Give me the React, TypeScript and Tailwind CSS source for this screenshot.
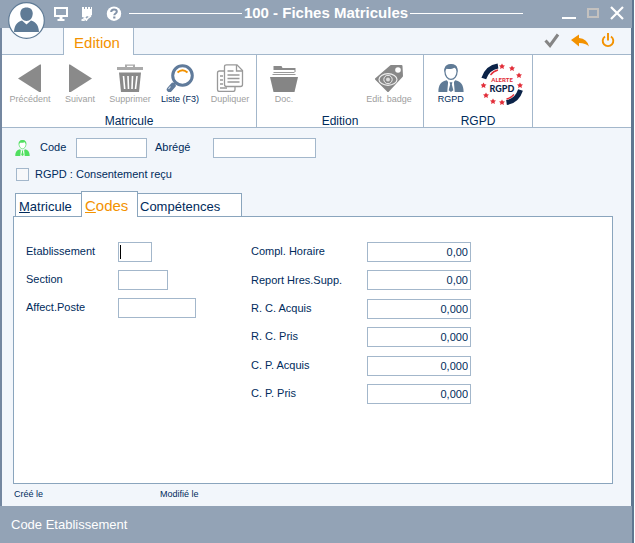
import type { ReactNode } from "react";

function Person({ className }: { className?: string }) {
  return (
    <svg viewBox="0 0 28 30" className={className} aria-hidden="true">
      <path d="M0.500 30c0-8 3-11 9-12.500l4.500 6 4.500-6c6 1.500 9 4.500 9 12.500z" fill="currentColor" />
      <path d="M11 18l3 4 3-4 1 12h-8z" fill="#fff" />
      <path d="M12.500 19.500h3l-.6 2.500 1.600 6-2.500 2-2.500-2 1.600-6z" fill="currentColor" />
      <path d="M7.500 8c0-4.500 2.500-7 6.500-7s6.500 2.500 6.500 7c0 4.500-3 8.500-6.500 8.500S7.500 12.500 7.500 8z" fill="#fff" stroke="currentColor" strokeWidth="1.300" />
      <path d="M7 9c-.8-6 2-9 7-9s7.800 3 7 9c-1-3-2-4.500-3.500-5-2 1.500-6 1.500-8 1-1.500 1-2 2-2.500 4z" fill="currentColor" />
    </svg>
  );
}

function Tool({ label, active, children }: { label: string; active?: boolean; children: ReactNode }) {
  return (
    <button
      type="button"
      className={`flex w-[50px] flex-col items-center whitespace-nowrap text-[9px] leading-[12px] ${active ? "text-[#002b5c]" : "text-[#a0a0a0]"}`}
    >
      <span className="flex h-[30px] items-center justify-center">{children}</span>
      {label}
    </button>
  );
}

function Group({ title, className, inner, children }: { title: string; className: string; inner: string; children: ReactNode }) {
  return (
    <section className={`flex flex-col justify-between border-r border-[#a3b7cb] ${className}`}>
      <div className={`flex justify-between pt-2 ${inner}`}>{children}</div>
      <h2 className="text-center text-[12px] leading-[12px] text-[#002b5c]">{title}</h2>
    </section>
  );
}

const box = "h-5 border border-[#a3b7cb] bg-white px-[2px] text-[11px] outline-none";

const codes = [
  { id: "etablissement", label: "Etablissement", width: "w-[34px]", caret: true },
  { id: "section", label: "Section", width: "w-[50px]", caret: false },
  { id: "poste", label: "Affect.Poste", width: "w-[78px]", caret: false },
];

const counters = [
  { id: "compl", label: "Compl. Horaire", value: "0,00" },
  { id: "report", label: "Report Hres.Supp.", value: "0,00" },
  { id: "rcacquis", label: "R. C. Acquis", value: "0,000" },
  { id: "rcpris", label: "R. C. Pris", value: "0,000" },
  { id: "cpacquis", label: "C. P. Acquis", value: "0,000" },
  { id: "cppris", label: "C. P. Pris", value: "0,000" },
];

function TitleBar() {
  return (
    <header className="relative flex h-7 items-center bg-[#93a3b6] pr-[7px] pb-[2px] pl-[53px] text-white">
      <button type="button" aria-label="Profil" className="absolute top-[2px] left-2 z-10">
        <svg viewBox="0 0 37 37" className="size-[37px]">
          <circle cx="18.500" cy="18.500" r="17.800" fill="#fff" stroke="#5f7b96" strokeWidth="1.200" />
          <path d="M6 30c.5-6 2-9.500 8-11.500l4.500 4 4.500-4c6 2 7.500 5.500 8 11.500z" fill="#5f7b96" />
          <path d="M12.300 11.500c0-4 2.400-6 6.200-6s6.200 2 6.200 6c0 4.500-2.700 7.500-6.200 7.500s-6.200-3-6.200-7.500z" fill="#5f7b96" />
        </svg>
      </button>
      <button type="button" aria-label="Poste">
        <svg viewBox="0 0 16 16" className="size-4">
          <path d="M1 2h14v10H1zM3 4v6h10V4zM6.500 12h3v2h2v2h-7v-2h2z" fill="#fff" fillRule="evenodd" />
        </svg>
      </button>
      <button type="button" aria-label="Notes" className="ml-[11px]">
        <svg viewBox="0 0 14 16" className="h-4 w-[14px]">
          <path d="M2 2h2v2h1V2h2v2h1V2h2v2h1V2h1v8l-3 2-2-1-2 2-3-1z" fill="#fff" />
          <path d="M2 15l3-2 1 1-3 2zM7 14l4-3M6 16l2-3" stroke="#fff" strokeWidth="1.300" fill="none" />
        </svg>
      </button>
      <button type="button" aria-label="Aide" className="ml-3">
        <svg viewBox="0 0 16 16" className="size-4">
          <circle cx="8" cy="8.700" r="7.200" fill="#fff" />
          <path d="M5.200 7C5.200 5.200 6.400 4.400 8 4.400s2.800.9 2.800 2.300c0 1.800-2.500 1.800-2.500 3.500" fill="none" stroke="#8292a8" strokeWidth="2" />
          <path d="M7.200 11.500h2.200v2H7.200z" fill="#8292a8" />
        </svg>
      </button>
      <span className="ml-[7px] h-px flex-1 bg-white" />
      <h1 className="px-[2px] text-[15px] leading-[18px] font-bold">100 - Fiches Matricules</h1>
      <span className="h-px flex-1 bg-white" />
      <div className="ml-[38px] flex items-center gap-[9px]">
        <button type="button" aria-label="Réduire">
          <svg viewBox="0 0 16 16" className="size-4"><path d="M1 12h14v2H1z" fill="#fff" /></svg>
        </button>
        <button type="button" aria-label="Agrandir">
          <svg viewBox="0 0 14 14" className="size-[14px]"><path d="M2 3h10v8H2z" fill="none" stroke="#c3c1bf" strokeWidth="2" /></svg>
        </button>
        <button type="button" aria-label="Fermer">
          <svg viewBox="0 0 16 16" className="size-4"><path d="M2 2l12 12M14 2L2 14" stroke="#fff" strokeWidth="2.200" /></svg>
        </button>
      </div>
    </header>
  );
}

function Ribbon() {
  return (
    <div className="flex h-[73px] border-b border-[#a3b7cb] bg-white">
      <Group title="Matricule" className="w-[255px]" inner="pr-[1px] pl-[3px]">
        <Tool label="Précédent">
          <svg viewBox="0 0 24 28" className="h-7 w-6"><path d="M0 14.500L22 .5h1v28h-1z" fill="#8a8a8a" /></svg>
        </Tool>
        <Tool label="Suivant">
          <svg viewBox="0 0 24 28" className="h-7 w-6"><path d="M24 14.500L2 .5H1v28h1z" fill="#8a8a8a" /></svg>
        </Tool>
        <Tool label="Supprimer">
          <svg viewBox="0 0 28 28" className="size-7">
            <path d="M1 3h8V.500h10V3h8v3H1zM11 1.800V3h6V1.800z" fill="#aaa" fillRule="evenodd" />
            <path d="M3 8.500h22L23 28H5z" fill="#8a8a8a" />
            <path d="M7.500 12l1.200 13M12 12l.5 13M16.500 12l-.5 13M21 12l-1.500 13" stroke="#fff" strokeWidth="1.600" />
          </svg>
        </Tool>
        <Tool label="Liste (F3)" active>
          <svg viewBox="0 0 28 28" className="size-7">
            <circle cx="16.500" cy="11.500" r="9.800" fill="#fff" stroke="#607b9b" strokeWidth="3" />
            <path d="M11.500 8.500q5-4.500 10 0" fill="none" stroke="#f39200" strokeWidth="1.800" />
            <path d="M9.500 18.500L7 21" stroke="#607b9b" strokeWidth="2" />
            <path d="M7 21.500L3.500 25.500" stroke="#607b9b" strokeWidth="5.500" strokeLinecap="round" />
            <path d="M4.500 22.500L2.500 25" stroke="#d5dfeb" strokeWidth="1.200" />
          </svg>
        </Tool>
        <Tool label="Dupliquer">
          <svg viewBox="0 0 28 28" className="size-7" fill="none" stroke="#999" strokeWidth="1.300">
            <path d="M8 7H3.500Q1.500 7 1.500 9v16.500q0 2 2 2H17q2 0 2-2V23" />
            <path d="M4 12h3M4 16h3M4 20h3M4 24h7" />
            <path d="M10.500.8h10.500l5.500 5.700v14q0 2-2 2h-14q-2 0-2-2V2.800q0-2 2-2z" fill="#fff" />
            <path d="M20.500 1v6h6M11.500 7h6M11.500 11h12M11.500 14.500h12M11.500 18h12" />
          </svg>
        </Tool>
      </Group>
      <Group title="Edition" className="w-[167px]" inner="pr-[9px] pl-[2px]">
        <Tool label="Doc.">
          <svg viewBox="0 0 28 28" className="size-7">
            <path d="M3.500 2h8l1 2h13v4h-1V6h-21z" fill="#8a8a8a" />
            <path d="M3.500 8.500h21M2.500 10.500h23" stroke="#999" strokeWidth="1" />
            <path d="M0 13h28l-3.500 15h-21z" fill="#858585" />
          </svg>
        </Tool>
        <Tool label="Edit. badge">
          <svg viewBox="0 0 30 28" className="h-7 w-[30px]">
            <path d="M17 2h10.500l.5 10L14 27 2 15z" fill="#888" stroke="#888" strokeWidth="2" strokeLinejoin="round" />
            <circle cx="24" cy="6" r="2.800" fill="#fff" />
            <ellipse cx="14" cy="15.500" rx="9" ry="5.800" fill="#888" stroke="#eee" strokeWidth="1.200" />
            <circle cx="14" cy="15.500" r="4.200" fill="none" stroke="#eee" strokeWidth="1" />
            <circle cx="14" cy="15.500" r="2" fill="#ddd" />
          </svg>
        </Tool>
      </Group>
      <Group title="RGPD" className="w-[109px]" inner="pr-[3px] pl-[2px]">
        <Tool label="RGPD" active>
          <Person className="h-7 w-7 text-[#607b96]" />
        </Tool>
        <button type="button" aria-label="Alerte RGPD" className="-mb-2 flex w-[54px] justify-center">
          <svg viewBox="0 0 42 42" className="size-[42px]">
            <path d="M2.800 15.500Q6.500 4.500 17 3" fill="none" stroke="#0b2348" strokeWidth="5" />
            <path d="M39.500 27Q36 38 25.500 39.500" fill="none" stroke="#0b2348" strokeWidth="5" />
            <path d="M9.500 12Q12.500 8 17 7M33 31.500Q30 35 25.500 36" fill="none" stroke="#e2303b" strokeWidth="1.300" />
            <path
              d="M21 .5l1 1.800 2 .2-1.500 1.400.4 2L21 5l-1.900.9.400-2L18 2.500l2-.2zM31 2.500l1 1.800 2 .2-1.500 1.400.4 2L31 7l-1.900.9.400-2L28 4.500l2-.2zM38 9.500l1 1.800 2 .2-1.500 1.400.4 2L38 14l-1.900.9.400-2-1.500-1.400 2-.2zM39 19.500l1 1.800 2 .2-1.500 1.400.4 2L39 24l-1.900.9.400-2-1.500-1.400 2-.2zM2.500 19.500l1 1.800 2 .2L4 22.900l.4 2-1.900-.9-1.900.9.400-2-1.500-1.400 2-.2zM5 29.500l1 1.800 2 .2-1.500 1.400.4 2L5 34l-1.900.9.400-2L2 31.500l2-.2zM12 35.500l1 1.800 2 .2-1.500 1.400.4 2L12 40l-1.900.9.400-2L9 37.500l2-.2zM21 36.500l1 1.800 2 .2-1.500 1.400.4 2L21 41l-1.900.9.400-2-1.500-1.400 2-.2z"
              fill="#e2303b"
            />
            <text x="21" y="19" textAnchor="middle" fontSize="6" fontWeight="900" fill="#e2303b" fontFamily="Lato, sans-serif">ALERTE</text>
            <text x="21" y="29" textAnchor="middle" fontSize="9" fontWeight="900" fill="#0b2348" fontFamily="Lato, sans-serif">RGPD</text>
          </svg>
        </button>
      </Group>
    </div>
  );
}

export default function App() {
  return (
    <div className="flex min-h-screen flex-col bg-white pr-px font-['Liberation_Sans',Arial,sans-serif] text-[11px] text-[#002b5c]">
      <div className="flex flex-1 flex-col border-r-2 border-[#5f7791]">
        <TitleBar />
        <div className="flex flex-1 flex-col border-r border-l-2 border-r-[#5f7791] border-l-[#7487a0] bg-[#f2f6fb]">
          <nav className="flex h-[27px]">
            <span className="w-[61px] border-b border-[#a3b7cb]" />
            <button type="button" className="w-[71px] border-x border-[#a3b7cb] bg-white pt-[3px] pr-[3px] text-center text-[15px] leading-[18px] text-[#f39200]">
              Edition
            </button>
            <div className="flex flex-1 items-center justify-end gap-[11px] border-b border-[#a3b7cb] pr-[15px]">
              <button type="button" aria-label="Valider">
                <svg viewBox="0 0 16 16" className="size-4"><path d="M1.500 7.500l4.500 5L14 1.500" fill="none" stroke="#858585" strokeWidth="3" /></svg>
              </button>
              <button type="button" aria-label="Annuler">
                <svg viewBox="0 0 18 16" className="h-4 w-[18px]"><path d="M0 7L8 1.500V5q8 .5 10 8.500-3-3.500-10-3.500v3.500z" fill="#f39200" /></svg>
              </button>
              <button type="button" aria-label="Quitter">
                <svg viewBox="0 0 16 16" className="size-4" fill="none" stroke="#f39200" strokeWidth="1.900">
                  <path d="M5 3.500a5.300 5.300 0 1 0 6 0M8 0v7.500" />
                </svg>
              </button>
            </div>
          </nav>
          <Ribbon />
          <main className="flex flex-1 flex-col pr-[18px] pl-[11px]">
            <div className="mt-[10px] flex items-center pl-[2px]">
              <Person className="mr-[10px] h-4 w-[15px] text-[#51df60]" />
              <label htmlFor="code" className="w-[36px] pb-px">Code</label>
              <input id="code" className={`${box} w-[71px]`} />
              <label htmlFor="abrege" className="ml-2 w-[58px] pb-px">Abrégé</label>
              <input id="abrege" className={`${box} w-[103px]`} />
            </div>
            <label className="mt-2 flex h-[17px] items-center gap-[6px] pl-[3px]">
              <input type="checkbox" className="size-[13px] appearance-none border border-[#a3b7cb] bg-[#f7f8fa]" />
              RGPD : Consentement reçu
            </label>
            <div role="tablist" className="mt-2 flex items-end pl-[2px] text-[13px]">
              <button type="button" role="tab" className="h-[23px] w-[66px] border-t border-l border-[#8aa5bd] bg-white pt-[3px] pl-[3px] text-left">
                <u>M</u>atricule
              </button>
              <button type="button" role="tab" aria-selected="true" className="relative z-10 -mb-px h-[26px] w-[57px] border-x border-t border-[#8aa5bd] bg-white pt-[3px] pl-[3px] text-left text-[15px] text-[#f39200]">
                <u>C</u>odes
              </button>
              <button type="button" role="tab" className="h-[23px] w-[104px] border-t border-r border-[#8aa5bd] bg-white pt-[3px] pl-[2px] text-left">
                Compétences
              </button>
            </div>
            <section className="flex flex-1 items-start border border-[#8aa5bd] bg-white px-3 pt-[25px]">
              <div className="flex w-[225px] flex-col gap-2">
                {codes.map((f) => (
                  <div key={f.id} className="flex items-center">
                    <label htmlFor={f.id} className="w-[92px] pb-px">{f.label}</label>
                    <span className="relative flex">
                      <input id={f.id} className={`${box} ${f.width}`} />
                      {f.caret && <span className="absolute top-[3px] left-[2px] h-[14px] w-px bg-black" />}
                    </span>
                  </div>
                ))}
              </div>
              <div className="flex h-[162px] flex-col justify-between">
                {counters.map((f) => (
                  <div key={f.id} className="flex items-center">
                    <label htmlFor={f.id} className="w-[116px] pb-px">{f.label}</label>
                    <input id={f.id} defaultValue={f.value} className={`${box} w-[104px] text-right`} />
                  </div>
                ))}
              </div>
            </section>
            <div className="flex h-[22px] items-center pl-px text-[9px]">
              <span className="w-[146px]">Créé le</span>
              <span>Modifié le</span>
            </div>
          </main>
        </div>
        <footer className="flex h-[37px] items-center bg-[#93a3b6] pl-[11px] text-[13px] text-white">Code Etablissement</footer>
      </div>
    </div>
  );
}
